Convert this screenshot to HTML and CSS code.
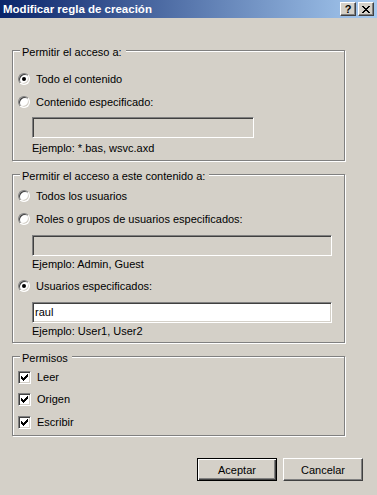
FILE: index.html
```html
<!DOCTYPE html>
<html lang="es">
<head>
  <meta charset="UTF-8" />
  <title>Modificar regla de creación</title>
  <link rel="stylesheet" href="styles.css">
</head>
<body>
  <div class="dialog">
    <div class="titlebar">
      <span class="title">Modificar regla de creación</span>
      <div class="caption-btns">
        <span class="cap-btn help">?</span>
        <span class="cap-btn">
          <svg width="8" height="7" viewBox="0 0 8 7" shape-rendering="crispEdges">
            <path d="M0 0h2v1H0zM6 0h2v1H6zM1 1h2v1H1zM5 1h2v1H5zM2 2h4v1H2zM3 3h2v1H3zM2 4h4v1H2zM1 5h2v1H1zM5 5h2v1H5zM0 6h2v1H0zM6 6h2v1H6z" fill="#000"/>
          </svg>
        </span>
      </div>
    </div>

    <div class="content">
      <!-- acceso al contenido -->
      <div class="group g-content">
        <div class="legend">Permitir el acceso a:</div>
        <div class="row first"><span class="radio checked"></span>Todo el contenido</div>
        <div class="row"><span class="radio"></span>Contenido especificado:</div>
        <div class="textbox disabled short"></div>
        <div class="hint">Ejemplo: *.bas, wsvc.axd</div>
      </div>

      <!-- usuarios -->
      <div class="group g-users">
        <div class="legend">Permitir el acceso a este contenido a:</div>
        <div class="row first"><span class="radio"></span>Todos los usuarios</div>
        <div class="row"><span class="radio"></span>Roles o grupos de usuarios especificados:</div>
        <div class="textbox disabled"></div>
        <div class="hint">Ejemplo: Admin, Guest</div>
        <div class="row"><span class="radio checked"></span>Usuarios especificados:</div>
        <div class="textbox">raul</div>
        <div class="hint">Ejemplo: User1, User2</div>
      </div>

      <!-- permisos -->
      <div class="group g-perms">
        <div class="legend">Permisos</div>
        <div class="row first"><span class="check"><svg width="7" height="7" viewBox="0 0 7 7" shape-rendering="crispEdges"><path d="M0 2h1v3H0zM1 3h1v3H1zM2 4h1v3H2zM3 3h1v3H3zM4 2h1v3H4zM5 1h1v3H5zM6 0h1v3H6z" fill="#000"/></svg></span>Leer</div>
        <div class="row"><span class="check"><svg width="7" height="7" viewBox="0 0 7 7" shape-rendering="crispEdges"><path d="M0 2h1v3H0zM1 3h1v3H1zM2 4h1v3H2zM3 3h1v3H3zM4 2h1v3H4zM5 1h1v3H5zM6 0h1v3H6z" fill="#000"/></svg></span>Origen</div>
        <div class="row last"><span class="check"><svg width="7" height="7" viewBox="0 0 7 7" shape-rendering="crispEdges"><path d="M0 2h1v3H0zM1 3h1v3H1zM2 4h1v3H2zM3 3h1v3H3zM4 2h1v3H4zM5 1h1v3H5zM6 0h1v3H6z" fill="#000"/></svg></span>Escribir</div>
      </div>

      <div class="footer">
        <button class="btn default">Aceptar</button>
        <button class="btn">Cancelar</button>
      </div>
    </div>
  </div>
</body>
</html>
```

FILE: styles.css
```css
html, body {
  margin: 0;
  padding: 0;
}

body {
  font-family: 'Liberation Sans', Arial, sans-serif;
  font-size: 11px;
  line-height: 13px;
  color: #000;
  background: #d4d0c8;
}

.dialog {
  width: 377px;
  height: 495px;
  background: #d4d0c8;
  overflow: hidden;
}

.titlebar {
  height: 18px;
  display: flex;
  align-items: center;
  justify-content: space-between;
  padding: 0 3px 0 3px;
  background: linear-gradient(to right, #0a246a, #a6caf0);
}

.title {
  color: #fff;
  font-weight: bold;
  font-size: 11.5px;
}

.caption-btns {
  display: flex;
  gap: 2px;
}

.cap-btn {
  width: 16px;
  height: 14px;
  box-sizing: border-box;
  display: flex;
  align-items: center;
  justify-content: center;
  background: #d4d0c8;
  border: 1px solid;
  border-color: #fff #404040 #404040 #fff;
  box-shadow: inset -1px -1px #808080;
}

.cap-btn.help {
  font-weight: bold;
  font-size: 11px;
  line-height: 12px;
}

.content {
  padding: 32px 0 0 12px;
}

.group {
  width: 333px;
  box-sizing: border-box;
  border: 1px solid #808080;
  box-shadow: inset 1px 1px #fff, 1px 1px #fff;
  padding: 0 0 0 5px;
}

.g-users,
.g-perms {
  margin-top: 13px;
}

.legend {
  width: fit-content;
  margin: -5px 0 0 2px;
  padding: 0 4px 0 2px;
  height: 13px;
  background: #d4d0c8;
}

.row {
  display: flex;
  align-items: center;
  height: 16px;
  margin-top: 8px;
}

/* grupo 1 */
.g-content .row { margin-top: 7px; }
.g-content .row.first { margin-top: 12px; }
.g-content .textbox { margin-top: 7px; }
.g-content .hint { margin-top: 4px; margin-bottom: 5px; }

/* grupo 2 */
.g-users .row { margin-top: 7px; }
.g-users .row.first { margin-top: 5px; }
.g-users .textbox { margin-top: 8px; }
.g-users .hint { margin-top: 2px; }
.g-users .hint:last-child { margin-bottom: 4px; }

/* grupo 3 */
.g-perms { padding-bottom: 5px; }
.g-perms .row { margin-top: 6px; }
.g-perms .row.first { margin-top: 4px; }
.g-perms .row.last { margin-top: 7px; }

.radio {
  width: 12px;
  height: 12px;
  box-sizing: border-box;
  border-radius: 50%;
  border: 1px solid;
  border-color: #808080 #fff #fff #808080;
  box-shadow: inset 1px 1px #404040, inset -1px -1px #d4d0c8;
  background: #fff;
  margin-right: 6px;
  display: flex;
  align-items: center;
  justify-content: center;
}

.radio.checked::after {
  content: "";
  width: 4px;
  height: 4px;
  border-radius: 50%;
  background: #000;
}

.check {
  width: 13px;
  height: 13px;
  box-sizing: border-box;
  border: 1px solid;
  border-color: #808080 #fff #fff #808080;
  box-shadow: inset 1px 1px #404040, inset -1px -1px #d4d0c8;
  background: #fff;
  margin-right: 6px;
  display: flex;
  align-items: center;
  justify-content: center;
}

.textbox {
  width: 300px;
  height: 21px;
  box-sizing: border-box;
  margin-left: 14px;
  border: 1px solid;
  border-color: #808080 #fff #fff #808080;
  box-shadow: inset 1px 1px #404040, inset -1px -1px #d4d0c8;
  background: #fff;
  padding: 0 2px;
  line-height: 19px;
}

.textbox.short {
  width: 222px;
}

.textbox.disabled {
  background: #d4d0c8;
}

.hint {
  margin-left: 14px;
}

.footer {
  display: flex;
  justify-content: flex-end;
  gap: 6px;
  margin-top: 22px;
  padding-right: 14px;
}

.btn {
  width: 80px;
  height: 23px;
  box-sizing: border-box;
  font-family: 'Liberation Sans', Arial, sans-serif;
  font-size: 11px;
  color: #000;
  background: #d4d0c8;
  border: 1px solid;
  border-color: #fff #404040 #404040 #fff;
  box-shadow: inset -1px -1px #808080;
  padding: 0;
}

.btn.default {
  border-color: #000;
  box-shadow: inset 1px 1px #fff, inset -1px -1px #404040, inset -2px -2px #808080;
}
```
